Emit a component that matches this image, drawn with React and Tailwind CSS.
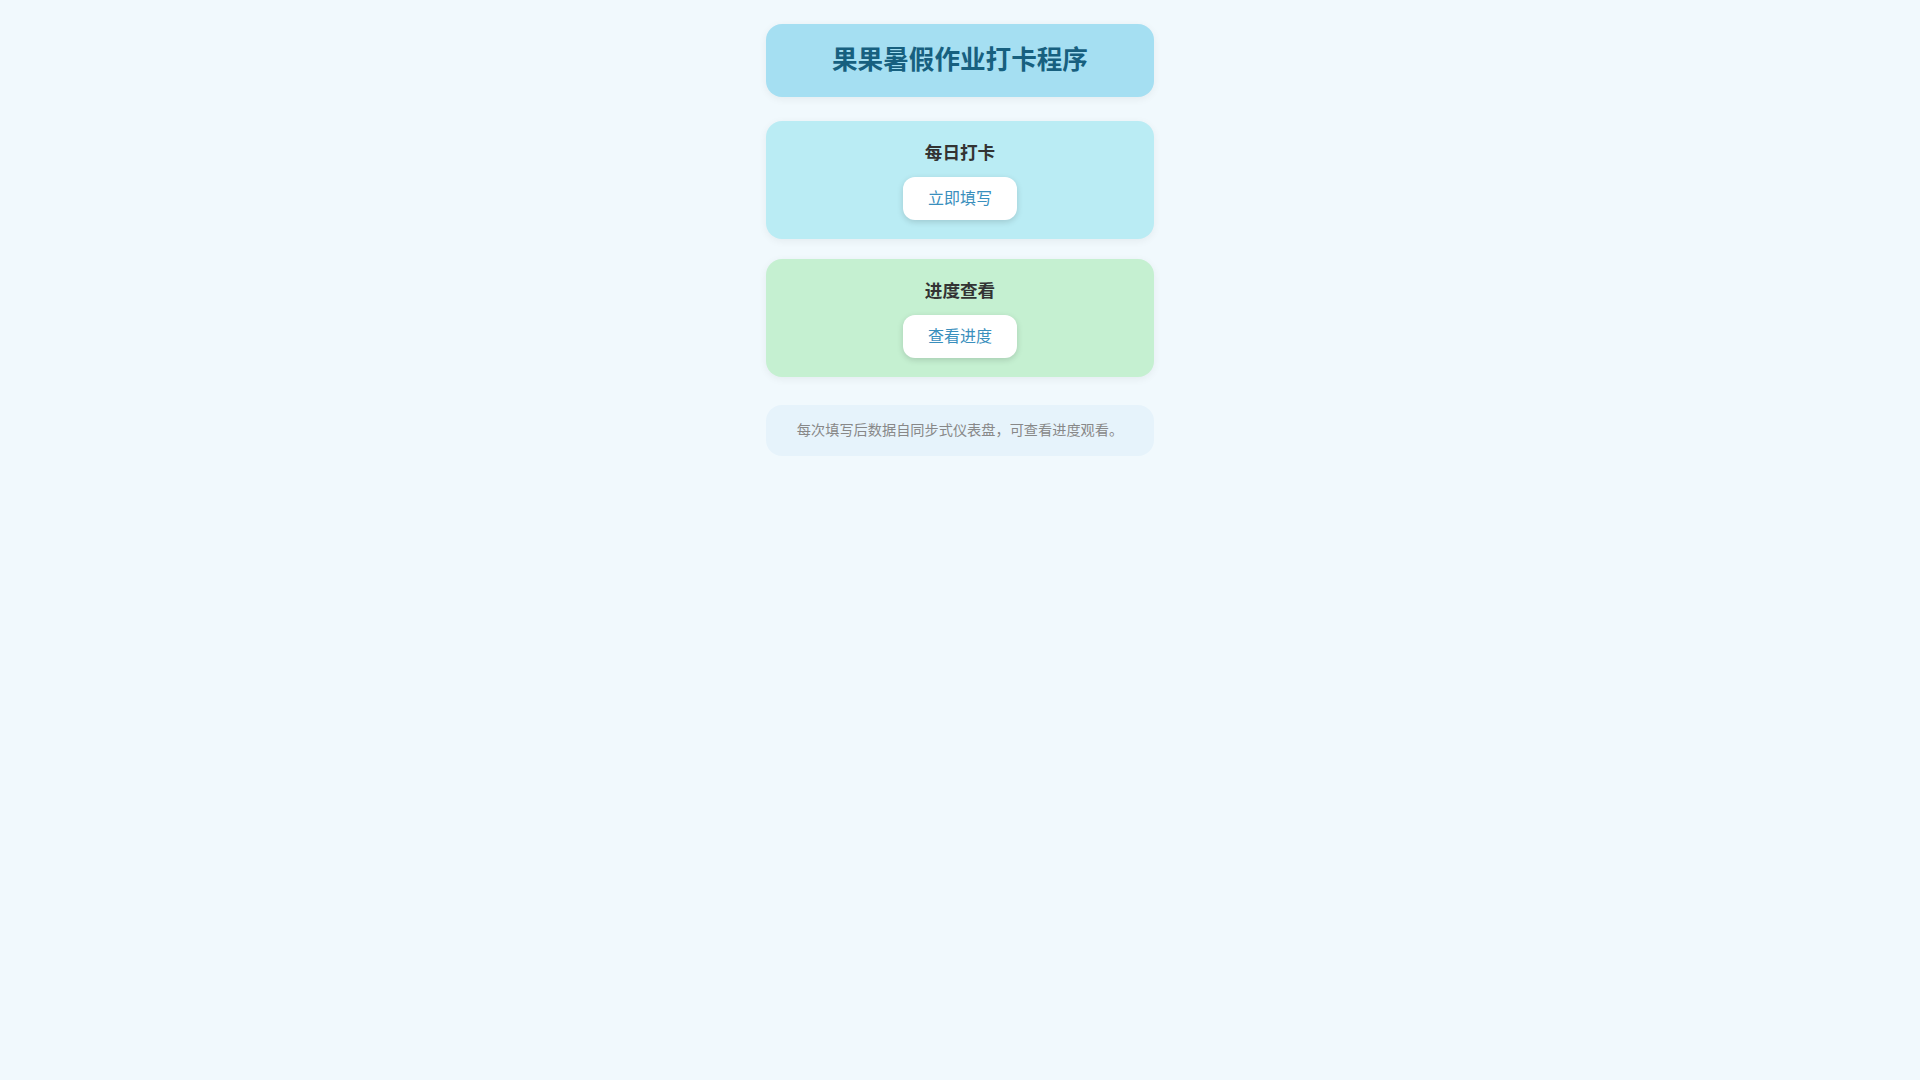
export default function App() {
    const sections = [
        { title: '每日打卡', action: '立即填写', bg: 'bg-[#baecf4]' },
        { title: '进度查看', action: '查看进度', bg: 'bg-[#c5f0d1]' },
    ]

    return (
        <div
            className="min-h-screen bg-[#f1f9fd] pt-6"
            style={{ fontFamily: '"Liberation Sans", "Noto Sans CJK SC", sans-serif' }}
        >
            <div className="w-[388px] mx-auto flex flex-col">
                {/* Header */}
                <div className="bg-[#a5dff2] rounded-2xl py-[17px] text-center shadow-[0_2px_8px_rgba(0,0,0,0.06)]">
                    <h1 className="text-[25.6px] leading-[39px] font-bold text-[#17607f]">
                        果果暑假作业打卡程序
                    </h1>
                </div>

                {/* Sections */}
                <div className="mt-6 flex flex-col gap-5">
                    {sections.map((s) => (
                        <div
                            key={s.title}
                            className={`${s.bg} rounded-2xl pt-[19px] pb-[19px] flex flex-col items-center shadow-[0_2px_8px_rgba(0,0,0,0.06)]`}
                        >
                            <h2 className="text-[17.6px] leading-[26px] font-bold text-[#333]">{s.title}</h2>
                            <button className="mt-[11px] bg-white rounded-xl px-[25px] h-[43px] text-base font-normal text-[#3a8fbd] shadow-[0_2px_6px_rgba(0,0,0,0.15)]">
                                {s.action}
                            </button>
                        </div>
                    ))}
                </div>

                {/* Footer note */}
                <div className="mt-[28px] bg-[#e6f3fb] rounded-2xl py-[15px] text-center">
                    <p className="text-[14.2px] leading-[21px] text-[#888]">
                        每次填写后数据自同步式仪表盘，可查看进度观看。
                    </p>
                </div>
            </div>
        </div>
    )
}
